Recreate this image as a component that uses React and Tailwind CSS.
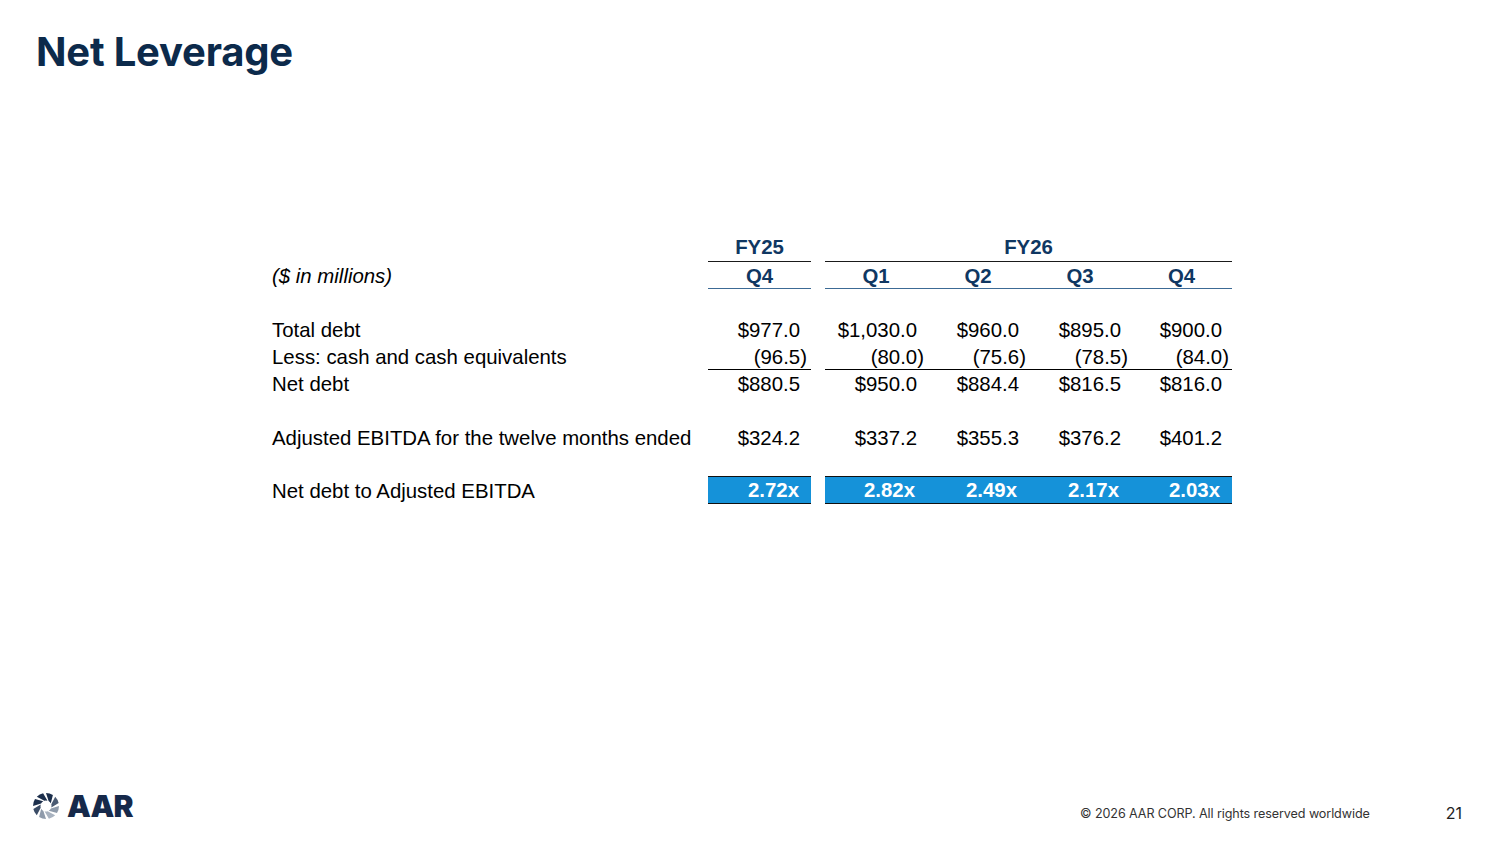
import React from 'react';

const quarters = [
  { label: 'Q1', total: '$1,030.0', cash: '(80.0)', net: '$950.0', ebitda: '$337.2', ratio: '2.82x' },
  { label: 'Q2', total: '$960.0', cash: '(75.6)', net: '$884.4', ebitda: '$355.3', ratio: '2.49x' },
  { label: 'Q3', total: '$895.0', cash: '(78.5)', net: '$816.5', ebitda: '$376.2', ratio: '2.17x' },
  { label: 'Q4', total: '$900.0', cash: '(84.0)', net: '$816.0', ebitda: '$401.2', ratio: '2.03x' },
];

const fy25 = { label: 'Q4', total: '$977.0', cash: '(96.5)', net: '$880.5', ebitda: '$324.2', ratio: '2.72x' };

// shutter blades, dark on the upper left, grey on the lower right
const bladeColors = ['#1c2f4c', '#4a5a72', '#8f9bab', '#a9b3c0', '#8f9bab', '#3b4c66', '#1c2f4c', '#1c2f4c'];

const AarMark = () => (
  <svg width="28" height="28" viewBox="0 0 28 28">
    {bladeColors.map((c, i) => (
      <path
        key={i}
        d="M14 1 A13 13 0 0 1 20.9 3 L18.8 11.3 Q17.9 9.8 16.6 9.1 Z"
        fill={c}
        transform={`rotate(${i * 45} 14 14)`}
      />
    ))}
  </svg>
);

const ValueRow = ({ label, field, underline }) => (
  <>
    <div className="h-[27px] flex items-center pt-[2px]">{label}</div>
    <div className={`h-[27px] flex items-center justify-end pr-[11px] pt-[2px] ${underline ? 'border-b-[1.5px] border-black' : ''}`}>
      {field === 'cash' ? <span className="-mr-[7px]">{fy25[field]}</span> : fy25[field]}
    </div>
    <div />
    {quarters.map((q) => (
      <div
        key={q.label}
        className={`h-[27px] flex items-center justify-end pr-[10px] pt-[2px] ${underline ? 'border-b-[1.5px] border-black' : ''}`}
      >
        {field === 'cash' ? <span className="-mr-[7px]">{q[field]}</span> : q[field]}
      </div>
    ))}
  </>
);

const Spacer = () => <div className="col-span-7 h-[27px]" />;

export default function App() {
  return (
    <div className="relative h-[844px] w-full bg-white flex flex-col" style={{ fontFamily: '"Liberation Sans", Arial, sans-serif' }}>
      <h1 className="pl-[36px] pt-[27px] text-[40px] font-bold leading-[50px] text-[#0c2a4b] tracking-[-0.2px]" style={{ fontFamily: 'Inter, "Open Sans", sans-serif' }}>
        Net Leverage
      </h1>

      <div className="pl-[272px] pt-[157px]">
        <div className="grid grid-cols-[436px_103px_14px_102px_102px_102px_101px] text-[20.4px] text-black">
          <div className="h-[28px]" />
          <div className="h-[28px] flex items-center justify-center font-bold text-[#0f3762] border-b-[1.5px] border-[#1a1a1a]">FY25</div>
          <div />
          <div className="col-span-4 h-[28px] flex items-center justify-center font-bold text-[#0f3762] border-b-[1.5px] border-[#1a1a1a]">FY26</div>

          <div className="h-[27px] flex items-center italic pt-[2px]">($ in millions)</div>
          <div className="h-[27px] flex items-center justify-center pt-[2px] font-bold text-[#0f3762] border-b-[1.5px] border-[#3c6a95]">{fy25.label}</div>
          <div />
          {quarters.map((q) => (
            <div key={q.label} className="h-[27px] flex items-center justify-center pt-[2px] font-bold text-[#0f3762] border-b-[1.5px] border-[#3c6a95]">
              {q.label}
            </div>
          ))}

          <Spacer />
          <ValueRow label="Total debt" field="total" />
          <ValueRow label="Less: cash and cash equivalents" field="cash" underline />
          <ValueRow label="Net debt" field="net" />
          <Spacer />
          <ValueRow label="Adjusted EBITDA for the twelve months ended" field="ebitda" />
          <div className="col-span-7 h-[25px]" />

          <div className="h-[28px] flex items-center pt-[2px]">Net debt to Adjusted EBITDA</div>
          <div className="h-[28px] flex items-center justify-end pr-[12px] pt-[1px] bg-[#1592d9] text-white font-bold border-y-[1.5px] border-[#111]">{fy25.ratio}</div>
          <div />
          {quarters.map((q) => (
            <div key={q.label} className="h-[28px] flex items-center justify-end pr-[12px] pt-[1px] bg-[#1592d9] text-white font-bold border-y-[1.5px] border-[#111]">
              {q.ratio}
            </div>
          ))}
        </div>
      </div>

      <div className="mt-auto flex justify-between pl-[32px] pr-[38px] pb-[21px]">
        <div className="flex items-center gap-[7px] pb-[2px]">
          <AarMark />
          <span className="text-[30px] font-black leading-none text-[#16294a] tracking-[-0.8px]" style={{ fontFamily: 'Inter, sans-serif' }}>AAR</span>
        </div>
        <div className="flex items-end gap-[76px]" style={{ fontFamily: 'Inter, "Open Sans", sans-serif' }}>
          <span className="text-[12.6px] leading-[18px] text-[#333] tracking-[-0.1px]">© 2026 AAR CORP. All rights reserved worldwide</span>
          <span className="text-[16px] leading-[20px] text-[#222]">21</span>
        </div>
      </div>
    </div>
  );
}
